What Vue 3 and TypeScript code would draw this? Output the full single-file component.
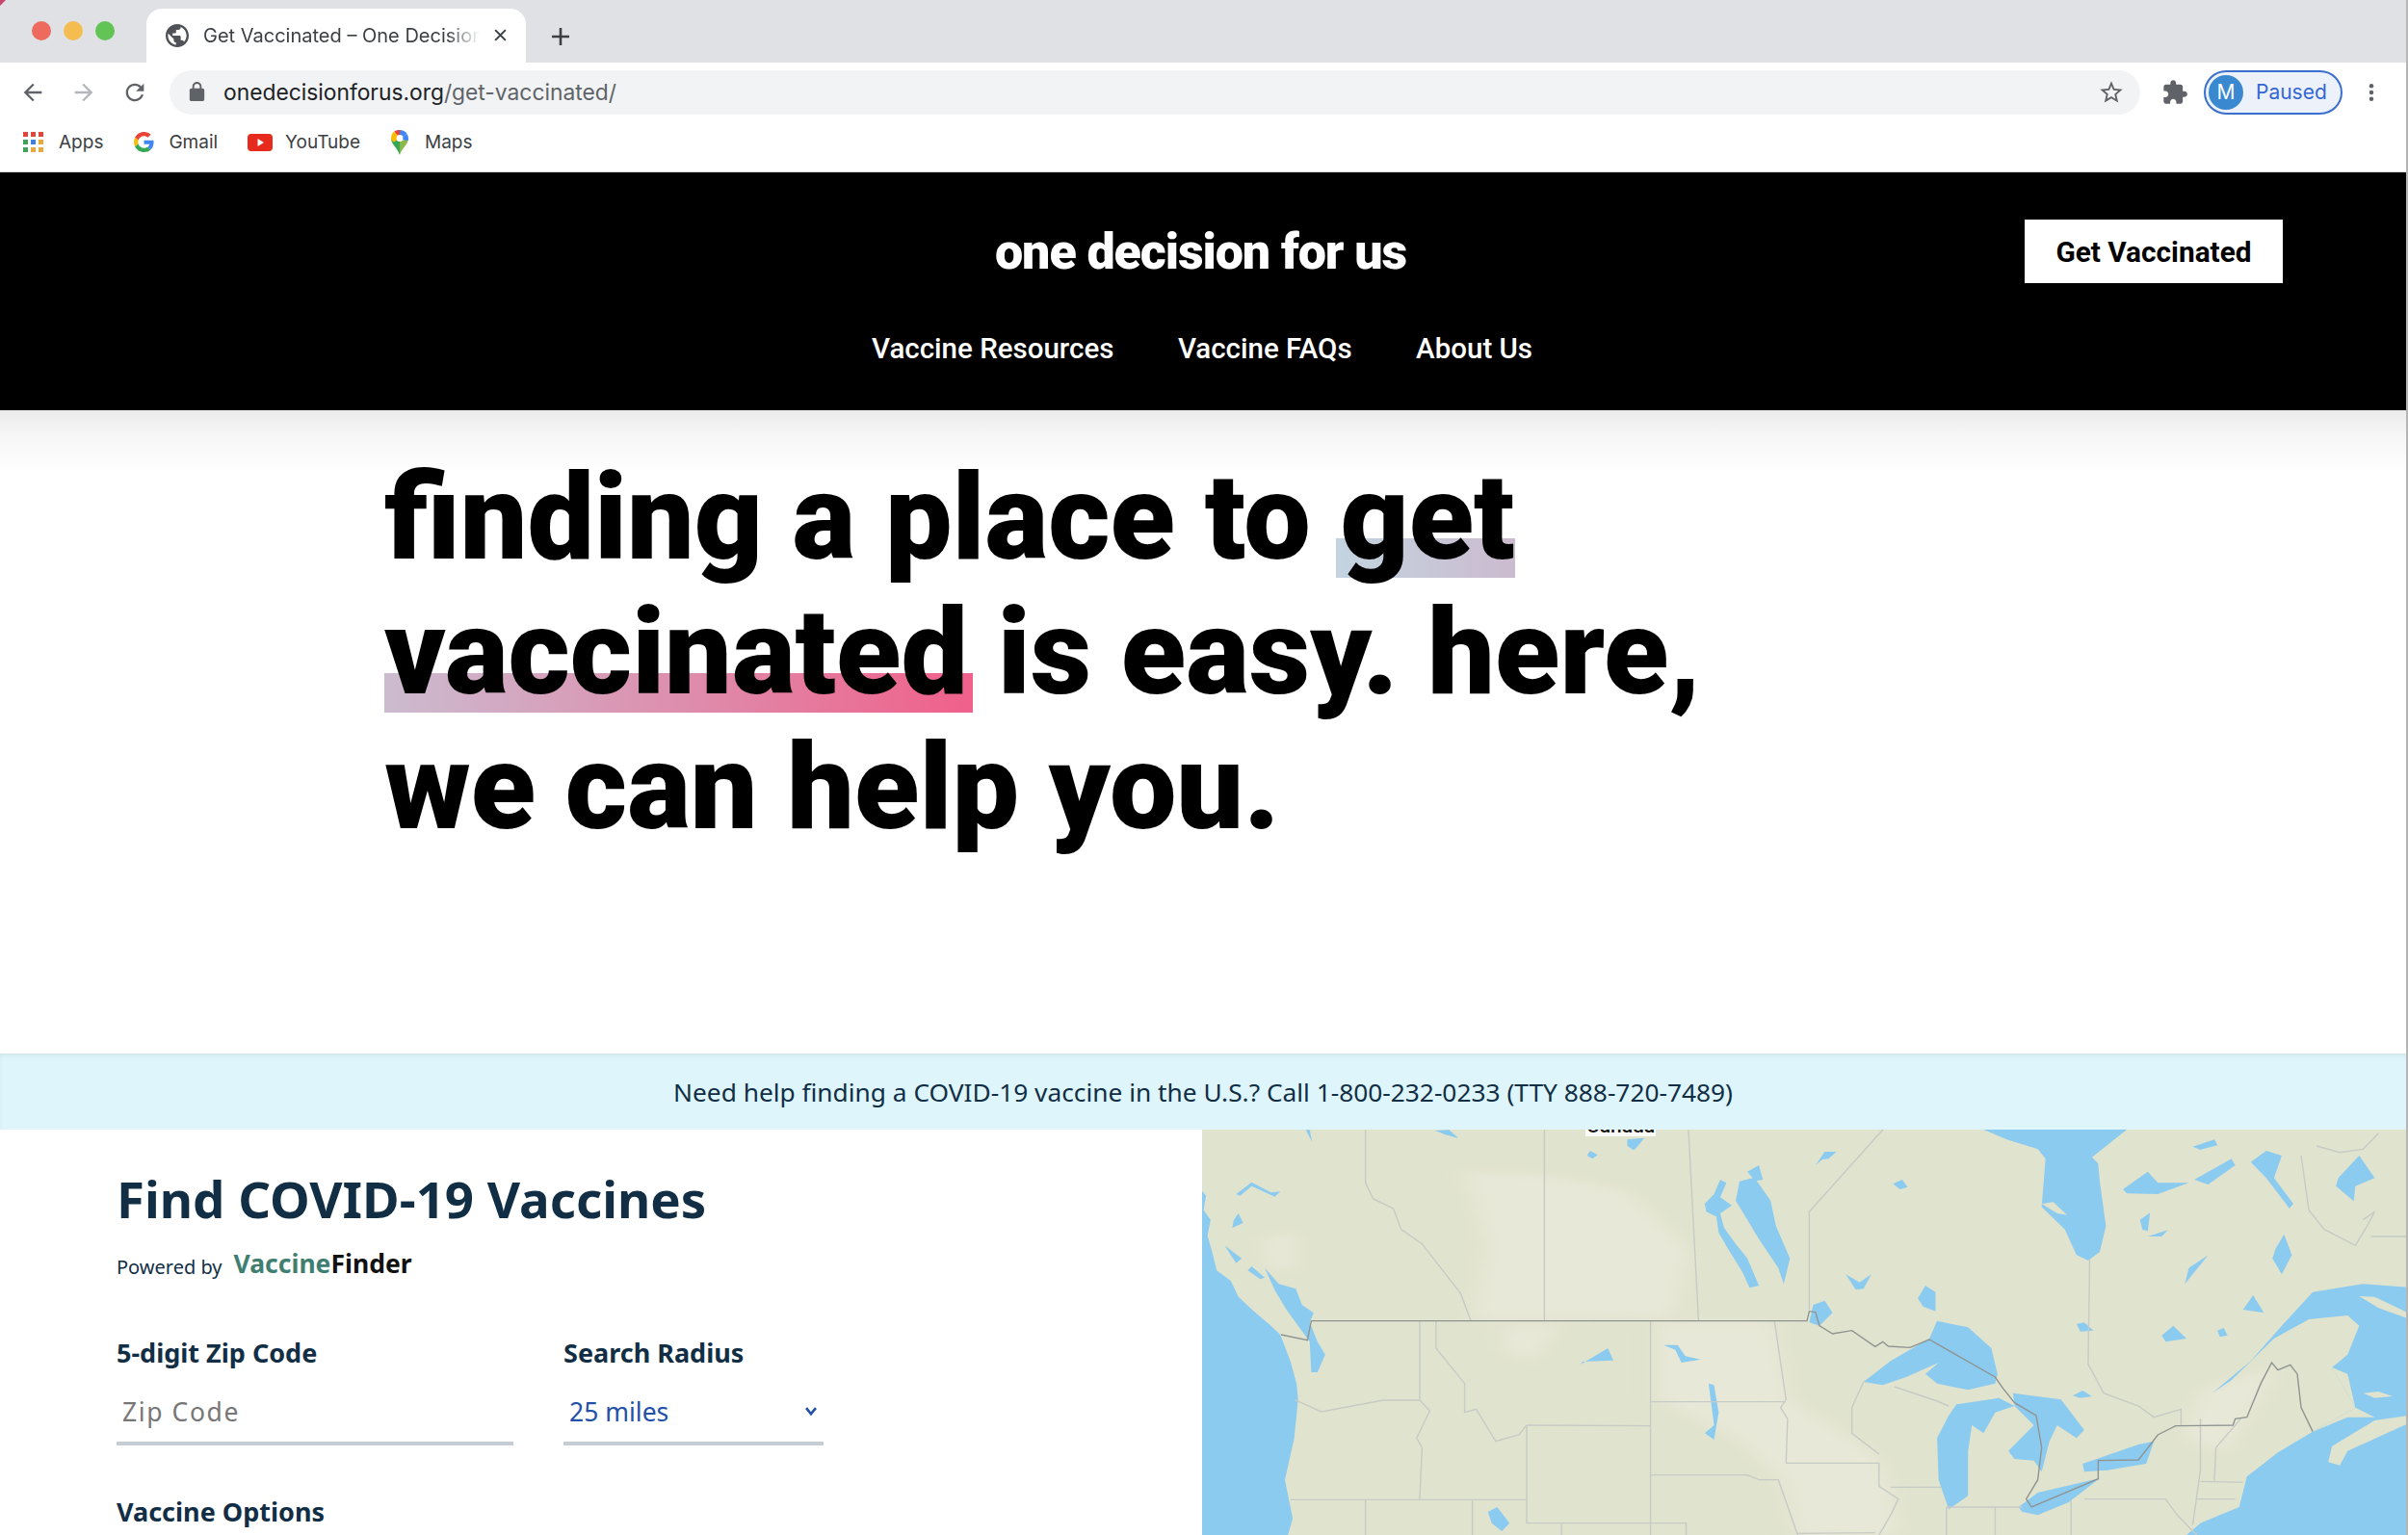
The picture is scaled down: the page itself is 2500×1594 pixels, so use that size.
<script setup lang="ts">
const paths = {
  back: 'M20 11H7.83l5.59-5.59L12 4l-8 8 8 8 1.41-1.41L7.83 13H20v-2z',
  reload: 'M17.65 6.35C16.2 4.9 14.21 4 12 4c-4.42 0-7.99 3.58-7.99 8s3.57 8 7.99 8c3.73 0 6.84-2.55 7.73-6h-2.08c-.82 2.33-3.04 4-5.65 4-3.31 0-6-2.69-6-6s2.69-6 6-6c1.66 0 3.14.69 4.22 1.78L13 11h7V4l-2.35 2.35z',
  star: 'M22 9.24l-7.19-.62L12 2 9.19 8.63 2 9.24l5.46 4.73L5.82 21 12 17.27 18.18 21l-1.63-7.03L22 9.24zM12 15.4l-3.76 2.27 1-4.28-3.32-2.88 4.38-.38L12 6.1l1.71 4.04 4.38.38-3.32 2.88 1 4.28L12 15.4z',
  puzzle: 'M20.5 11H19V7c0-1.1-.9-2-2-2h-4V3.5C13 2.12 11.88 1 10.5 1S8 2.12 8 3.5V5H4c-1.1 0-1.99.9-1.99 2v3.8H3.5c1.49 0 2.7 1.21 2.7 2.7s-1.21 2.7-2.7 2.7H2V20c0 1.1.9 2 2 2h3.8v-1.5c0-1.49 1.21-2.7 2.7-2.7 1.49 0 2.7 1.21 2.7 2.7V22H17c1.1 0 2-.9 2-2v-4h1.5c1.38 0 2.5-1.12 2.5-2.5S21.88 11 20.5 11z',
  lock: 'M18 8h-1V6c0-2.76-2.24-5-5-5S7 3.24 7 6v2H6c-1.1 0-2 .9-2 2v10c0 1.1.9 2 2 2h12c1.1 0 2-.9 2-2V10c0-1.1-.9-2-2-2zM9 6c0-1.66 1.34-3 3-3s3 1.34 3 3v2H9V6z',
  globe: 'M12 2C6.48 2 2 6.48 2 12s4.48 10 10 10 10-4.48 10-10S17.52 2 12 2zm-1 17.93c-3.95-.49-7-3.85-7-7.93 0-.62.08-1.21.21-1.79L9 15v1c0 1.1.9 2 2 2v1.93zm6.9-2.54c-.26-.81-1-1.39-1.9-1.39h-1v-3c0-.55-.45-1-1-1H8v-2h2c.55 0 1-.45 1-1V7h2c1.1 0 2-.9 2-2v-.41c2.93 1.19 5 4.06 5 7.41 0 2.08-.8 3.97-2.1 5.39z',
}
const appColors = ['#e2453a','#e2453a','#e2453a','#3fa35a','#3f7fe0','#e8a93a','#3fa35a','#e8a93a','#e8a93a']

const patches = [
  'M350 170L450 180L560 230L640 420L620 620L360 630L380 400Z',
  'M600 640L750 640L770 880L880 1050L900 1150L910 1302L780 1302L760 1130L700 1000L600 880Z',
  'M400 650L470 650L440 760L400 730Z',
  'M1280 1000L1300 850L1400 780L1370 900L1330 1050Z',
  'M90 380L130 360L130 470L100 480Z',
]
const water = [
  'M11 230L16 245L13 290L22 320L18 370L24 420L30 478L48 510L58 560L78 605L100 650L112 678L125 760L133 830L135 880L130 1000L118 1130L128 1250L122 1302L11 1302Z',
  'M92 470L110 520L132 535L140 585L155 610L150 640L160 700L170 740L160 795L152 795L150 700L135 650L120 600L105 540Z',
  'M40 400L62 440L55 455L48 430ZM58 300L64 330L50 345L52 320ZM75 465L92 500L86 505L70 478Z',
  'M55 240L75 203L100 235L112 232L105 248L75 215L60 245Z',
  'M312 42L330 40L342 66L325 55Z',
  'M145 40L150 40L153 78Z',
  'M512 105L522 118L515 130L508 120Z',
  'M560 70L582 65L572 95L568 103L560 90Z',
  'M803 150L815 108L830 108L820 130L812 132Z',
  'M715 170L730 150L735 195L727 198L745 260L752 340L770 440L762 520L755 470L730 380L700 260L705 200L722 190Z',
  'M660 270L672 240L680 195L688 205L680 250L695 275L680 300L685 345L700 395L715 440L730 525L718 532L708 480L690 410L678 360L675 310L662 295Z',
  'M903 208L915 195L922 218L912 225Z',
  'M842 490L860 515L875 490L865 535L855 538Z',
  'M935 565L945 525L958 545L958 605L942 590Z',
  'M800 585L815 572L825 610L808 650L795 640Z',
  'M1020 39L1205 39L1160 125L1168 145L1170 200L1178 340L1170 420L1155 447L1140 430L1125 350L1095 280L1100 130L1090 100L1050 70Z',
  'M1290 92L1318 70L1322 88L1300 102Z',
  'M1200 225L1232 170L1245 205L1285 205L1245 240L1205 238Z',
  'M1292 195L1340 130L1345 150L1310 210Z',
  'M1365 140L1385 105L1405 120L1395 190L1420 270L1415 285L1385 190Z',
  'M1478 190L1505 120L1525 190L1500 215L1498 262L1475 215Z',
  'M1222 320L1235 298L1232 355L1225 350Z',
  'M1232 372L1258 352L1250 372Z',
  'M1397 410L1408 365L1418 430L1405 490L1393 440Z',
  'M1280 520L1285 470L1310 430L1290 490Z',
  'M1355 600L1368 555L1382 610Z',
  'M1140 645L1150 640L1162 665L1145 668Z',
  'M1250 680L1265 650L1282 690L1255 700Z',
  'M1322 665L1330 657L1335 680L1325 685Z',
  'M865 825L900 760L950 690L960 635L1000 655L1030 720L1038 800L1035 830L1000 850L960 830L945 800L962 765L920 810L890 835Z',
  'M1135 868L1148 852L1160 870L1145 875Z',
  'M960 1000L975 930L985 895L1040 875L1060 900L1035 920L1020 985L1005 960L1000 1040L1000 1180L975 1222L962 1130Z',
  'M1058 860L1120 880L1150 975L1140 1000L1115 960L1105 1010L1095 1105L1085 1070L1060 1065L1052 1040L1085 960L1060 900Z',
  'M1065 1215L1090 1170L1170 1125L1130 1200L1090 1240L1070 1230Z',
  'M1148 1080L1220 1020L1240 1010L1230 1080L1180 1100L1150 1105Z',
  'M1315 860L1365 760L1405 650L1445 545L1510 520L1568 530L1568 1302L1282 1302L1300 1265L1350 1215L1360 1120L1400 1045L1445 980L1500 905L1470 780L1490 740L1505 650L1490 618L1440 630L1395 690L1340 820Z',
  'M500 770L535 720L542 758L502 762Z',
  'M607 710L625 710L635 745L655 755L630 765L622 725Z',
  'M665 830L672 835L678 920L672 1005L660 985L672 960Z',
  'M380 1230L392 1215L408 1265L398 1290L385 1265Z',
]
const land = [
  'M1505 558L1525 560L1568 610L1568 628L1530 595Z',
  'M1465 1075L1470 1025L1525 945L1568 930L1568 955L1490 1040L1480 1085Z',
  'M1510 860L1530 855L1548 870L1525 875Z',
  'M1500 905L1490 800L1470 780L1500 905L1525 935L1490 935L1445 980Z',
  'M1095 270L1110 265L1128 305L1115 300Z',
]
const thin = [
  'M222 40L222 205L232 255L258 285L268 350L295 395L345 550L358 635',
  'M453 40L453 635',
  'M639 40L652 635',
  'M890 39L795 295L795 600',
  'M1157 445L1155 770L1175 860L1220 900L1240 935L1275 910L1275 960',
  'M1450 90L1480 110L1510 100L1530 50M1430 120L1440 290L1460 350L1500 400L1515 340L1525 295L1510 320',
  'M1520 372L1568 372',
  'M292 635L292 880M313 635L313 720L350 830L350 920L365 910L390 1010L420 990L430 960',
  'M590 635L590 1302M750 635L765 880L758 905L767 940L765 1078',
  'M130 880L165 918L245 882L292 882L305 915L288 1000L295 1030L292 1190',
  'M430 960L590 962M590 887L762 887',
  'M430 960L430 1265L636 1265L636 1302',
  'M125 1192L430 1192M222 1192L222 1302M360 1192L360 1302M475 1265L475 1302',
  'M765 1078L885 1078L885 1150L910 1190L900 1240L885 1302M590 1115L715 1115L730 1130L755 1130L780 1302',
  'M900 1153L965 1153M972 1215L1070 1215M972 1215L972 1302M1035 1215L1035 1302M1133 1190L1133 1302M1150 1190L1255 1190L1270 1240L1295 1302',
  'M905 840L960 885L975 900M865 825L850 905L850 985L885 1050',
  'M1300 940L1300 1100L1290 1270M1352 940L1320 1030L1318 1135M1300 1135L1355 1138M1295 1190L1345 1190',
  'M780 1297L880 1295',
]
const intl = [
  'M113 678L147 695L152 635L792 635L795 605L803 608L808 650L825 675L850 665L880 715L890 700L897 714L925 718L950 693L1035 810L1045 845L1060 890L1088 930L1095 1030L1090 1130L1075 1190L1082 1215L1168 1127L1168 1070L1220 1068L1245 990L1268 962L1342 960L1345 940L1360 935L1378 830L1392 765L1400 788L1416 772L1425 800L1430 905L1445 980',
]
</script>

<template>
  <div class="page">
    <svg class="corner-tl" viewBox="0 0 8 8"><path d="M0 0H6L0 6Z" fill="#c8456c" /></svg>
    <span class="edge"></span>
    <div class="tabstrip">
      <div class="lights">
        <span class="light red"></span><span class="light yellow"></span><span class="light green"></span>
      </div>
      <div class="tab">
        <svg class="ico-globe" viewBox="2 2 20 20"><path :d="paths.globe" fill="#4f5257" /></svg>
        <span class="tab-title">Get Vaccinated – One Decision for Us</span>
        <svg class="ico-close" viewBox="0 0 14 14"><path d="M2 2L12 12M12 2L2 12" stroke="#3c4043" stroke-width="1.9" fill="none" /></svg>
      </div>
      <svg class="ico-plus" viewBox="0 0 20 20"><path d="M10 1V19M1 10H19" stroke="#3c4043" stroke-width="2.6" fill="none" /></svg>
    </div>

    <div class="toolbar">
      <svg class="nav-ico" viewBox="0 0 24 24"><path :d="paths.back" fill="#5f6368" /></svg>
      <svg class="nav-ico fwd" viewBox="0 0 24 24"><path d="M4 13h12.17l-5.59 5.59L12 20l8-8-8-8-1.41 1.41L16.17 11H4v2z" fill="#b4b6b9" /></svg>
      <svg class="nav-ico reload" viewBox="0 0 24 24"><path :d="paths.reload" fill="#5f6368" /></svg>
      <div class="omnibox">
        <svg class="ico-lock" viewBox="0 0 24 24"><path :d="paths.lock" fill="#5f6368" /></svg>
        <span class="url">onedecisionforus.org<span class="url-path">/get-vaccinated/</span></span>
        <svg class="ico-star" viewBox="0 0 24 24"><path :d="paths.star" fill="#5f6368" /></svg>
      </div>
      <svg class="ico-puzzle" viewBox="0 0 24 24"><path :d="paths.puzzle" fill="#5f6368" /></svg>
      <div class="profile">
        <span class="avatar">M</span>
        <span class="paused">Paused</span>
      </div>
      <svg class="ico-menu" viewBox="0 0 8 24"><circle cx="4" cy="3" r="3" fill="#5f6368" /><circle cx="4" cy="12" r="3" fill="#5f6368" /><circle cx="4" cy="21" r="3" fill="#5f6368" /></svg>
    </div>

    <div class="bookmarks">
      <div class="bm bm-apps">
        <span class="apps-grid"><i v-for="(c, i) in appColors" :key="i" :style="{ background: c }"></i></span>
        <span>Apps</span>
      </div>
      <div class="bm bm-gmail">
        <svg class="g-ico" viewBox="0 0 48 48">
          <path fill="#EA4335" d="M24 9.5c3.54 0 6.71 1.22 9.21 3.6l6.85-6.85C35.9 2.38 30.47 0 24 0 14.62 0 6.51 5.38 2.56 13.22l7.98 6.19C12.43 13.72 17.74 9.5 24 9.5z"/>
          <path fill="#4285F4" d="M46.98 24.55c0-1.57-.15-3.09-.38-4.55H24v9.02h12.94c-.58 2.96-2.26 5.48-4.78 7.18l7.73 6c4.51-4.18 7.09-10.36 7.09-17.65z"/>
          <path fill="#FBBC05" d="M10.53 28.59c-.48-1.45-.76-2.99-.76-4.59s.27-3.14.76-4.59l-7.98-6.19C.92 16.46 0 20.12 0 24c0 3.88.92 7.54 2.56 10.78l7.97-6.19z"/>
          <path fill="#34A853" d="M24 48c6.48 0 11.93-2.13 15.89-5.81l-7.73-6c-2.15 1.45-4.92 2.3-8.16 2.3-6.26 0-11.57-4.22-13.47-9.91l-7.98 6.19C6.51 42.62 14.62 48 24 48z"/>
        </svg>
        <span>Gmail</span>
      </div>
      <div class="bm bm-yt">
        <svg class="yt-ico" viewBox="0 0 26 18"><rect width="26" height="18" rx="4" fill="#e62b1e" /><path d="M10.5 5L17 9L10.5 13Z" fill="#fff" /></svg>
        <span>YouTube</span>
      </div>
      <div class="bm bm-maps">
        <svg class="pin-ico" viewBox="0 0 20 27">
          <path d="M10 27C8 20 1 16 1 9.5L10 13Z" fill="#34a853" />
          <path d="M10 27C12 20 19 16 19 9.5L10 13Z" fill="#8ab84a" />
          <path d="M1 9.5C1 6.5 2.3 4 4.4 2.6L10 9.5L4 13.5C2 12.5 1 11 1 9.5Z" fill="#fbbc05" />
          <path d="M4.4 2.6C6 1.4 8 1 10 1L10 9.5Z" fill="#ea4335" />
          <path d="M10 1C13 1 16 2.4 17.5 5L10 9.5Z" fill="#4285f4" />
          <path d="M17.5 5C19 7.5 19.4 10 18.6 12L12 11L10 9.5Z" fill="#4285f4" />
          <circle cx="10" cy="9.5" r="3.4" fill="#fff" />
        </svg>
        <span>Maps</span>
      </div>
    </div>

    <header class="site-header">
      <div class="brand-row">
        <div class="brand">one decision for us</div>
        <a class="cta">Get Vaccinated</a>
      </div>
      <nav class="site-nav">
        <a>Vaccine Resources</a>
        <a>Vaccine FAQs</a>
        <a>About Us</a>
      </nav>
    </header>

    <section class="hero">
      <h1>finding a place to <span class="mark">get vaccinated</span> is easy. here, we can help you.</h1>
    </section>

    <div class="banner">Need help finding a COVID-19 vaccine in the U.S.? Call 1-800-232-0233 (TTY 888-720-7489)</div>

    <section class="finder">
      <div class="form">
        <h2>Find COVID-19 Vaccines</h2>
        <div class="powered">
          <span class="pw">Powered by</span>
          <span class="vf"><span class="vf-green">Vaccine</span>Finder</span>
        </div>
        <div class="fields">
          <div class="field field-zip">
            <label>5-digit Zip Code</label>
            <div class="control placeholder">Zip Code</div>
          </div>
          <div class="field field-radius">
            <label>Search Radius</label>
            <div class="control select">
              <span>25 miles</span>
              <svg class="chev" viewBox="0 0 12 10"><path d="M1.5 2L6 7.5L10.5 2" stroke="#2350a8" stroke-width="2.4" fill="none" /></svg>
            </div>
          </div>
        </div>
        <div class="opts">Vaccine Options</div>
      </div>
      <div class="map">
        <svg class="map-svg" viewBox="11 39 1557 1263" preserveAspectRatio="none">
          <defs>
            <filter id="soft" x="-20%" y="-20%" width="140%" height="140%"><feGaussianBlur stdDeviation="14" /></filter>
          </defs>
          <rect x="11" y="39" width="1557" height="1263" fill="#e0e3cd" />
          <g filter="url(#soft)">
            <path v-for="(p, i) in patches" :key="'p' + i" :d="p" fill="#e8e8d8" />
          </g>
          <path v-for="(p, i) in water" :key="'w' + i" :d="p" fill="#8ccbf0" />
          <path v-for="(p, i) in land" :key="'l' + i" :d="p" fill="#e0e3cd" />
          <path v-for="(p, i) in thin" :key="'t' + i" :d="p" class="state" />
          <path v-for="(p, i) in intl" :key="'n' + i" :d="p" class="nation" />
        </svg>
        <span class="map-label">Canada</span>
      </div>
    </section>
  </div>
</template>

<style scoped>
.page { position: relative; width: 2500px; height: 1594px; overflow: hidden; background: #fff; display: flex; flex-direction: column; font-family: "Noto Sans", sans-serif; }
.corner-tl { position: absolute; left: 0; top: 0; width: 8px; height: 8px; z-index: 5; }
.edge { position: absolute; right: 0; top: 0; bottom: 0; width: 2px; background: #b5b5b5; z-index: 5; }

.tabstrip { height: 65px; flex: none; background: #dfe1e5; display: flex; align-items: flex-end; }
.lights { display: flex; gap: 13px; width: 152px; padding: 0 0 23px 33px; box-sizing: border-box; align-self: flex-end; }
.light { width: 20px; height: 20px; border-radius: 50%; }
.red { background: #ee6a5f; }
.yellow { background: #f5bd4f; }
.green { background: #61c454; }
.tab { width: 394px; height: 56px; background: #fff; border-radius: 16px 16px 0 0; display: flex; align-items: center; padding: 0 17px 1px 20px; box-sizing: border-box; font: 400 20px "Inter", sans-serif; color: #3c4043; }
.ico-globe { width: 24px; height: 24px; flex: none; }
.tab-title { margin-left: 15px; width: 287px; flex: none; white-space: nowrap; overflow: hidden; -webkit-mask-image: linear-gradient(90deg, #000 88%, transparent); mask-image: linear-gradient(90deg, #000 88%, transparent); }
.ico-close { width: 15px; height: 15px; margin-left: 14px; flex: none; }
.ico-plus { width: 20px; height: 20px; margin: 0 0 17px 26px; }

.toolbar { height: 65px; flex: none; display: flex; align-items: center; padding-bottom: 4px; box-sizing: border-box; }
.nav-ico { width: 28px; height: 28px; margin-left: 20px; flex: none; }
.nav-ico.fwd, .nav-ico.reload { margin-left: 25px; }
.omnibox { margin-left: 22px; width: 2046px; height: 46px; border-radius: 23px; background: #f1f3f4; display: flex; align-items: center; padding: 0 16px 0 17px; box-sizing: border-box; flex: none; }
.ico-lock { width: 23px; height: 23px; flex: none; }
.url { margin-left: 16px; font: 400 22.8px "Inter", sans-serif; color: #202124; flex: 1; white-space: nowrap; }
.url-path { color: #5f6368; }
.ico-star { width: 28px; height: 28px; flex: none; }
.ico-puzzle { width: 28px; height: 28px; margin-left: 22px; flex: none; }
.profile { margin-left: 16px; width: 144px; height: 46px; border: 2px solid #3a6fce; border-radius: 23px; background: #ecf1fa; box-sizing: border-box; display: flex; align-items: center; padding-left: 3px; flex: none; }
.avatar { width: 36px; height: 36px; border-radius: 50%; background: #3a88cf; color: #fff; font: 400 21px "Inter", sans-serif; display: flex; align-items: center; justify-content: center; }
.paused { margin-left: 13px; color: #3367d6; font: 400 21px "Inter", sans-serif; }
.ico-menu { width: 6px; height: 20px; margin-left: 27px; flex: none; }

.bookmarks { height: 49px; flex: none; display: flex; align-items: center; padding: 0 0 13px 24px; box-sizing: border-box; font: 400 19px "Inter", sans-serif; color: #3c4043; border-bottom: 1px solid #d8d9db; }
.bm { display: flex; align-items: center; flex: none; }
.apps-grid { width: 22px; height: 22px; display: grid; grid-template-columns: repeat(3, 5px); grid-auto-rows: 5px; gap: 3px; margin-right: 15px; }
.bm-gmail { margin-left: 32px; }
.g-ico { width: 21px; height: 21px; margin-right: 15px; }
.bm-yt { margin-left: 31px; }
.yt-ico { width: 26px; height: 18px; margin-right: 13px; }
.bm-maps { margin-left: 31px; }
.pin-ico { width: 20px; height: 27px; margin-right: 16px; }

.site-header { height: 247px; flex: none; background: #000; color: #fff; display: flex; flex-direction: column; font-family: "Roboto", sans-serif; }
.brand-row { height: 159px; padding-top: 49px; box-sizing: border-box; display: flex; justify-content: flex-end; padding-right: 130px; position: relative; }
.brand { position: absolute; left: 1033px; top: 50px; font-weight: 900; font-size: 52px; line-height: 66px; letter-spacing: -1.1px; white-space: nowrap; }
.cta { width: 268px; height: 66px; background: #fff; color: #000; font-weight: 700; font-size: 29.8px; display: flex; align-items: center; justify-content: center; }
.site-nav { display: flex; gap: 66.5px; padding-left: 905px; padding-top: 1px; font-weight: 500; font-size: 29.5px; line-height: 46px; }

.hero { height: 668px; flex: none; box-sizing: border-box; padding: 42px 0 0 399px; background: linear-gradient(#ebebeb, #f6f6f6 25px, #fff 65px); }
h1 { margin: 0; width: 1400px; font: 900 123.6px/140px "Roboto", sans-serif; color: #000; }
.mark { padding: 0 5px; margin: 0 -5px; background-image: linear-gradient(90deg, #c3d4e0 0%, #ceb4ca 30%, #f0608a 100%); background-repeat: no-repeat; background-size: 100% 41px; background-position: 0 94px; }

.banner { height: 79px; flex: none; padding-right: 2px; box-sizing: border-box; background: #def6fb; box-shadow: inset 0 3px 6px -3px rgba(0,0,0,.12); display: flex; align-items: center; justify-content: center; font-size: 26.3px; color: #112e45; }

.finder { flex: 1; min-height: 0; display: grid; grid-template-columns: 1248px 1252px; }
.form { padding: 36px 0 0 121px; color: #112e45; }
h2 { margin: 0; font-size: 52.8px; line-height: 72px; font-weight: 700; }
.powered { display: flex; align-items: center; gap: 12px; margin-top: 13px; font-size: 20px; height: 36px; }
.pw { position: relative; top: 3px; }
.vf { font-size: 26.5px; font-weight: 700; color: #111; }
.vf-green { color: #3f7f72; }
.fields { display: flex; gap: 52px; margin-top: 55px; }
.field-zip { width: 412px; }
.field-radius { width: 270px; }
label { display: block; font-size: 27px; font-weight: 700; line-height: 40px; }
.control { height: 67px; margin-top: 9px; border-bottom: 4px solid #c5ccd6; display: flex; align-items: center; padding: 0 6px; font-size: 26.5px; box-sizing: border-box; }
.placeholder { color: #777; letter-spacing: 1.6px; }
.select { color: #2350a8; justify-content: space-between; padding-right: 6px; }
.chev { width: 14px; height: 11px; }
.opts { margin-top: 49px; font-size: 27px; font-weight: 700; line-height: 40px; }

.map { position: relative; overflow: hidden; }
.map-svg { display: block; width: 1252px; height: 421px; }
.state { fill: none; stroke: #c6cbc6; stroke-width: 1.4px; vector-effect: non-scaling-stroke; }
.nation { fill: none; stroke: #8f9492; stroke-width: 1.4px; vector-effect: non-scaling-stroke; }
.map-label { position: absolute; left: 398px; top: -15px; font: 500 21px "Roboto", sans-serif; color: #111; background: rgba(255,255,255,.8); line-height: 22px; padding: 0 1px; }
</style>

<style>
html, body { margin: 0; background: #fff; }
</style>
